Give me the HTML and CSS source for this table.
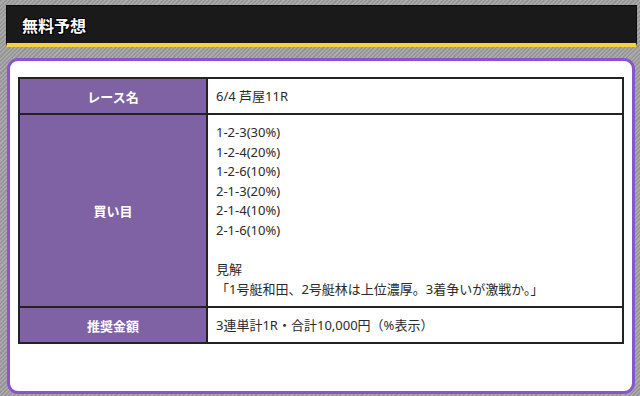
FILE: index.html
```html
<!DOCTYPE html>
<html lang="ja">
<head>
<meta charset="utf-8">
<title>無料予想</title>
<link rel="stylesheet" href="styles.css">
</head>
<body>
<div class="page">
  <header class="head">
    <h1 class="head-title">無料予想</h1>
  </header>
  <section class="card">
    <div class="info">
      <div class="label">レース名</div>
      <div class="value">6/4 芦屋11R</div>
      <div class="label">買い目</div>
      <div class="value value-tall">1-2-3(30%)<br>1-2-4(20%)<br>1-2-6(10%)<br>2-1-3(20%)<br>2-1-4(10%)<br>2-1-6(10%)<br><br>見解<br>「1号艇和田、2号艇林は上位濃厚。3着争いが激戦か。」</div>
      <div class="label">推奨金額</div>
      <div class="value">3連単計1R・合計10,000円（%表示）</div>
    </div>
  </section>
</div>
</body>
</html>
```
FILE: styles.css
```css
html, body {
  margin: 0;
  padding: 0;
  height: 100%;
  overflow: hidden;
}
body {
  background-color: #9d9d9d;
  background-image: repeating-linear-gradient(-45deg, #ababab 0 1.5px, #959595 1.5px 3px);
  font-family: "Noto Sans CJK JP", "Noto Sans", sans-serif;
  color: #222;
}
.page {
  display: flex;
  flex-direction: column;
  padding: 5px 3px 0 6px;
}
.head {
  background: #1a1a1a;
  border: 1px solid #0c0c0c;
  border-bottom: 4px solid #f3d245;
  height: 37px;
  display: flex;
  align-items: center;
  padding-left: 15px;
}
.head-title {
  margin: 0;
  font-size: 16px;
  font-weight: 700;
  color: #fff;
  text-shadow: 1px 1px 0 #000, -1px -1px 0 #000, 1px -1px 0 #000, -1px 1px 0 #000;
}
.card {
  margin: 11px 2px 0 1px;
  background: #fff;
  border: 3px solid #8a54d0;
  border-radius: 11px;
  padding: 16px 8px 47px 8px;
}
.info {
  display: grid;
  grid-template-columns: 186px 1fr;
  gap: 2px;
  background: #222;
  border: 2px solid #222;
}
.label {
  background: #7e62a3;
  color: #fff;
  font-weight: 700;
  font-size: 13px;
  display: flex;
  align-items: center;
  justify-content: center;
}
.value {
  background: #fff;
  font-family: "Noto Sans", "Noto Sans CJK JP", sans-serif;
  font-size: 13px;
  line-height: 20px;
  padding: 7px 8px;
  color: #2a2a2a;
}
.value-tall {
  line-height: 19.6px;
  padding: 8px 8px 7px;
}
```
